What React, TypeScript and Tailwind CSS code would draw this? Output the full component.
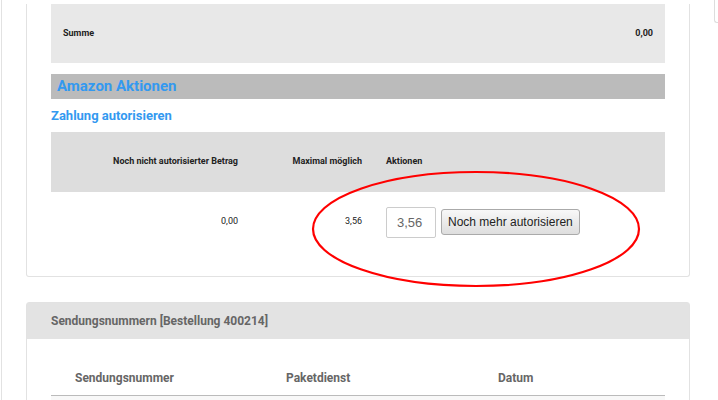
import React from 'react';

const roboto = { fontFamily: 'Roboto, "Liberation Sans", Arial, sans-serif' };

const AmazonCard: React.FC = () => (
    <div className="w-[664px] border border-t-0 border-[#e2e2e2] rounded-b-[3px] px-[24px] pb-[24px] bg-white">
        {/* Summe */}
        <div className="mt-[4px] h-[59px] bg-[#e8e8e8] flex items-center justify-between px-[12px] text-[9px] font-bold text-[#222]">
            <span>Summe</span>
            <span>0,00</span>
        </div>

        <div className="mt-[11px] h-[25px] bg-[#bbbbbb] flex items-center px-[6px]">
            <h2 className="text-[15px] font-bold text-[#3399f0] leading-none">Amazon Aktionen</h2>
        </div>

        <h3 className="mt-[4px] mb-[4px] h-[25px] flex items-center text-[13px] font-bold text-[#3399f0]">Zahlung autorisieren</h3>

        <table className="w-full border-collapse text-[9px] text-[#222]">
            <thead>
                <tr className="h-[60px] bg-[#dddddd] font-bold">
                    <th className="w-[199px] text-right pr-[12px] font-bold">Noch nicht autorisierter Betrag</th>
                    <th className="w-[124px] text-right pr-[12px] font-bold">Maximal möglich</th>
                    <th className="text-left pl-[12px] font-bold">Aktionen</th>
                </tr>
            </thead>
            <tbody>
                <tr className="h-[60px]">
                    <td className="text-right pr-[12px]">0,00</td>
                    <td className="text-right pr-[12px]">3,56</td>
                    <td className="pl-[12px]">
                        <div className="flex items-center gap-[5px]" style={{ fontFamily: '"Liberation Sans", Arial, sans-serif' }}>
                            <input
                                defaultValue="3,56"
                                className="w-[50px] h-[31px] border border-[#cccccc] rounded-[2px] pl-[10px] text-[13px] text-[#666] outline-none"
                            />
                            <button className="h-[26px] px-[6px] border border-[#aaaaaa] rounded-[3px] bg-gradient-to-b from-[#f8f8f8] to-[#dedede] text-[12px] text-[#222]">
                                Noch mehr autorisieren
                            </button>
                        </div>
                    </td>
                </tr>
            </tbody>
        </table>
    </div>
);

const TrackingCard: React.FC = () => (
    <div className="mt-[25px] w-[664px] border border-[#e2e2e2] rounded-t-[3px] bg-white">
        <div className="h-[36px] bg-[#e3e3e3] flex items-center px-[24px] text-[12px] font-bold text-[#666]">
            Sendungsnummern [Bestellung 400214]
        </div>
        <div className="px-[24px] pt-[22px]">
            <div className="flex h-[35px] items-center text-[12px] font-bold text-[#666] border-b border-[#bbbbbb]">
                <span className="w-[211px] pl-[24px]">Sendungsnummer</span>
                <span className="w-[212px] pl-[24px]">Paketdienst</span>
                <span className="pl-[24px]">Datum</span>
            </div>
            <div className="h-[30px] bg-[#f8f8f8]" />
        </div>
    </div>
);

export default function App() {
    return (
        <div className="relative w-[718px] h-[400px] overflow-hidden bg-white flex" style={roboto}>
            <main className="ml-px w-[713px] shrink-0 border-l border-[#e2e2e2] px-[24px]">
                <AmazonCard />
                <TrackingCard />
            </main>
            <aside className="flex-1">
                <div className="h-[23px] border-l border-b border-[#dddddd] rounded-bl-[3px]" />
            </aside>

            {/* red marker */}
            <svg className="absolute left-[311px] top-[170px]" width="330" height="118" viewBox="0 0 330 118">
                <ellipse cx="165" cy="59" rx="163" ry="57" fill="none" stroke="#ff0000" strokeWidth="2.2" />
            </svg>
        </div>
    );
}
